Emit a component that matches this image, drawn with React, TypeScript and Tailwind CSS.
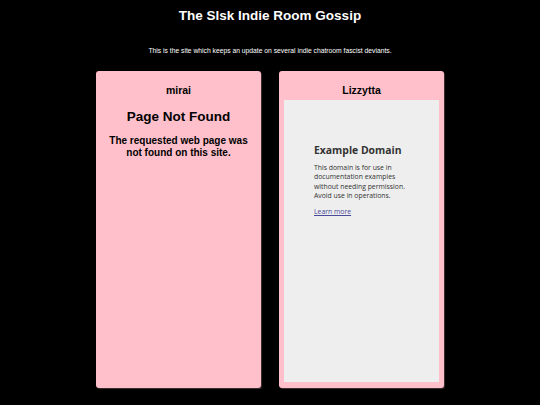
import React from "react";

export default function App() {
  return (
    <div className="min-h-screen h-[405px] w-full bg-black flex flex-col items-center text-white" style={{ fontFamily: '"Liberation Sans", Arial, sans-serif' }}>
      <h1 className="mt-[8px] text-[13.5px] leading-[16px] font-bold">The Slsk Indie Room Gossip</h1>
      <p className="mt-[22px] text-[6.75px] leading-[9px]">This is the site which keeps an update on several indie chatroom fascist deviants.</p>
      <div className="mt-[16px] flex gap-[18px]">
        <div className="w-[165px] h-[317px] bg-[#ffc0cb] rounded-[3px] shadow-[1px_1px_1px_rgba(80,60,60,0.8)] flex flex-col items-center text-black">
          <div className="mt-[13px] text-[10.5px] leading-[13px] font-bold">mirai</div>
          <div className="mt-[12px] text-[13.5px] leading-[16px] font-bold">Page Not Found</div>
          <div className="mt-[10px] text-[10px] leading-[12px] font-bold text-center">The requested web page was<br />not found on this site.</div>
        </div>
        <div className="w-[165px] h-[317px] bg-[#ffc0cb] rounded-[3px] shadow-[1px_1px_1px_rgba(80,60,60,0.8)] flex flex-col items-center text-black px-[5px] pb-[6px]">
          <div className="mt-[13px] text-[10.5px] leading-[13px] font-bold">Lizzytta</div>
          <div className="mt-[3px] w-full flex-1 bg-[#eeeeee] pl-[30px] pr-[10px] pt-[43px] text-[#333]" style={{ fontFamily: '"Open Sans", sans-serif' }}>
            <div className="text-[10.4px] leading-[14px] font-bold text-[#333]">Example Domain</div>
            <p className="mt-[6px] text-[6.85px] leading-[9.4px] text-[#333]">This domain is for use in<br />documentation examples<br />without needing permission.<br />Avoid use in operations.</p>
            <a className="mt-[6px] block text-[6.85px] leading-[10px] text-[#4a4a9a] underline">Learn more</a>
          </div>
        </div>
      </div>
    </div>
  );
}
